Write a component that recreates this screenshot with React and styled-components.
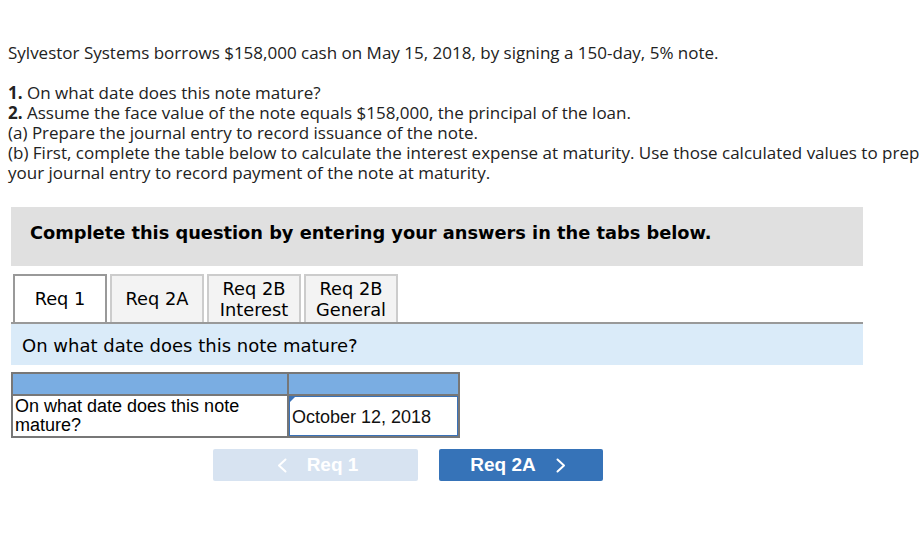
import React from "react";
import styled, { createGlobalStyle } from "styled-components";

const Global = createGlobalStyle`
  html, body { margin: 0; padding: 0; background: #fff; overflow: hidden; }
  body { width: 919px; height: 539px; }
`;

const Page = styled.div`
  padding-top: 43px;
  width: 919px;
  overflow: hidden;
`;

const Intro = styled.div`
  font-family: "Open Sans", "Lato", sans-serif;
  font-size: 17px;
  line-height: 20px;
  color: #222;
  margin-left: 8px;
  width: 945px;
`;

const P = styled.p`
  margin: 0 0 ${(p) => p.$gap || 0}px 0;
`;

const Section = styled.div`
  margin: 24px 0 0 11px;
  width: 852px;
`;

const Banner = styled.div`
  height: 59px;
  box-sizing: border-box;
  background: #e0e0e0;
  padding: 15px 0 0 19px;
  font-family: "DejaVu Sans", Verdana, sans-serif;
  font-weight: bold;
  font-size: 17.8px;
  line-height: 22px;
  color: #000;
`;

const Tabs = styled.div`
  display: flex;
  gap: 3px;
  margin-top: 8px;
  padding-left: 2px;
  border-bottom: 2px solid #999;
`;

const Tab = styled.div`
  width: 94px;
  height: 48px;
  box-sizing: border-box;
  display: flex;
  align-items: center;
  justify-content: center;
  text-align: center;
  font-family: "DejaVu Sans", Verdana, sans-serif;
  font-size: 17.8px;
  line-height: 21px;
  color: #000;
  border: 2px solid ${(p) => (p.$active ? "#999" : "#ccc")};
  border-bottom: none;
  background: ${(p) => (p.$active ? "#fff" : "#f3f3f3")};
  padding-bottom: 1px;
`;

const Prompt = styled.div`
  height: 41px;
  box-sizing: border-box;
  background: #daebf9;
  padding: 11px 0 0 11px;
  font-family: "DejaVu Sans", Verdana, sans-serif;
  font-size: 18px;
  line-height: 22px;
  color: #000;
`;

const Table = styled.table`
  margin: 7px 0 0 11px;
  border-collapse: collapse;
  font-family: "Liberation Sans", Arial, sans-serif;
  font-size: 18px;
  line-height: 19px;
  color: #000;
`;

const HeadCell = styled.td`
  background: #7aade2;
  border: 2px solid #777;
  height: 20px;
  padding: 0;
  width: ${(p) => p.$w}px;
`;

const Cell = styled.td`
  border: 2px solid #777;
  padding: 0 0 0 2px;
  height: 38px;
  vertical-align: middle;
`;

const InputCell = styled.td`
  border: 2px solid #777;
  padding: 0;
  height: 40px;
`;

const AnswerBox = styled.div`
  position: relative;
  box-sizing: border-box;
  height: 40px;
  border: 1px solid #3a72b8;
  display: flex;
  align-items: center;
  padding: 2px 0 0 2px;
  font-family: "Liberation Sans", Arial, sans-serif;
  font-size: 18px;
  color: #111;
`;

const Corner = styled.span`
  position: absolute;
  left: 0;
  top: 0;
  width: 0;
  height: 0;
  border-top: 5px solid #3a72b8;
  border-right: 5px solid transparent;
`;

const Nav = styled.div`
  display: flex;
  gap: 21px;
  margin: 11px 0 0 213px;
`;

const NavButton = styled.div`
  height: 32px;
  width: ${(p) => p.$w}px;
  box-sizing: border-box;
  border-radius: 2px;
  background: ${(p) => (p.$disabled ? "#d7e3f1" : "#3673b8")};
  color: #fff;
  display: flex;
  align-items: center;
  justify-content: center;
  gap: 20px;
  padding: ${(p) => p.$pad};
  font-family: "Liberation Sans", Arial, sans-serif;
  font-weight: 700;
  font-size: 19px;
`;

const Chevron = ({ dir }) => (
  <svg width="10" height="15" viewBox="0 0 10 15" fill="none">
    <path
      d={dir === "left" ? "M8.5 1.5 L2 7.5 L8.5 13.5" : "M1.5 1.5 L8 7.5 L1.5 13.5"}
      stroke="#fff"
      strokeWidth="2"
      strokeLinecap="round"
      strokeLinejoin="round"
    />
  </svg>
);

export default function App() {
  return (
    <Page>
      <Global />
      <Intro>
        <P $gap={20}>
          Sylvestor Systems borrows $158,000 cash on May 15, 2018, by signing a 150-day, 5% note.
        </P>
        <P>
          <b>1.</b> On what date does this note mature?
        </P>
        <P>
          <b>2.</b> Assume the face value of the note equals $158,000, the principal of the loan.
        </P>
        <P>(a) Prepare the journal entry to record issuance of the note.</P>
        <P>
          (b) First, complete the table below to calculate the interest expense at maturity. Use
          those calculated values to prepare your journal entry to record payment of the note at
          maturity.
        </P>
      </Intro>
      <Section>
        <Banner>Complete this question by entering your answers in the tabs below.</Banner>
        <Tabs>
          <Tab $active>Req 1</Tab>
          <Tab>Req 2A</Tab>
          <Tab>
            Req 2B
            <br />
            Interest
          </Tab>
          <Tab>
            Req 2B
            <br />
            General
          </Tab>
        </Tabs>
        <Prompt>On what date does this note mature?</Prompt>
      </Section>
      <Table>
        <tbody>
          <tr>
            <HeadCell $w={274} />
            <HeadCell $w={169} />
          </tr>
          <tr>
            <Cell>
              On what date does this note
              <br />
              mature?
            </Cell>
            <InputCell>
              <AnswerBox>
                <Corner />
                October 12, 2018
              </AnswerBox>
            </InputCell>
          </tr>
        </tbody>
      </Table>
      <Nav>
        <NavButton $disabled $w={205} $pad="0 0 0 4px">
          <Chevron dir="left" />
          Req 1
        </NavButton>
        <NavButton $w={164} $pad="0 6px 0 0">
          Req 2A
          <Chevron dir="right" />
        </NavButton>
      </Nav>
    </Page>
  );
}
